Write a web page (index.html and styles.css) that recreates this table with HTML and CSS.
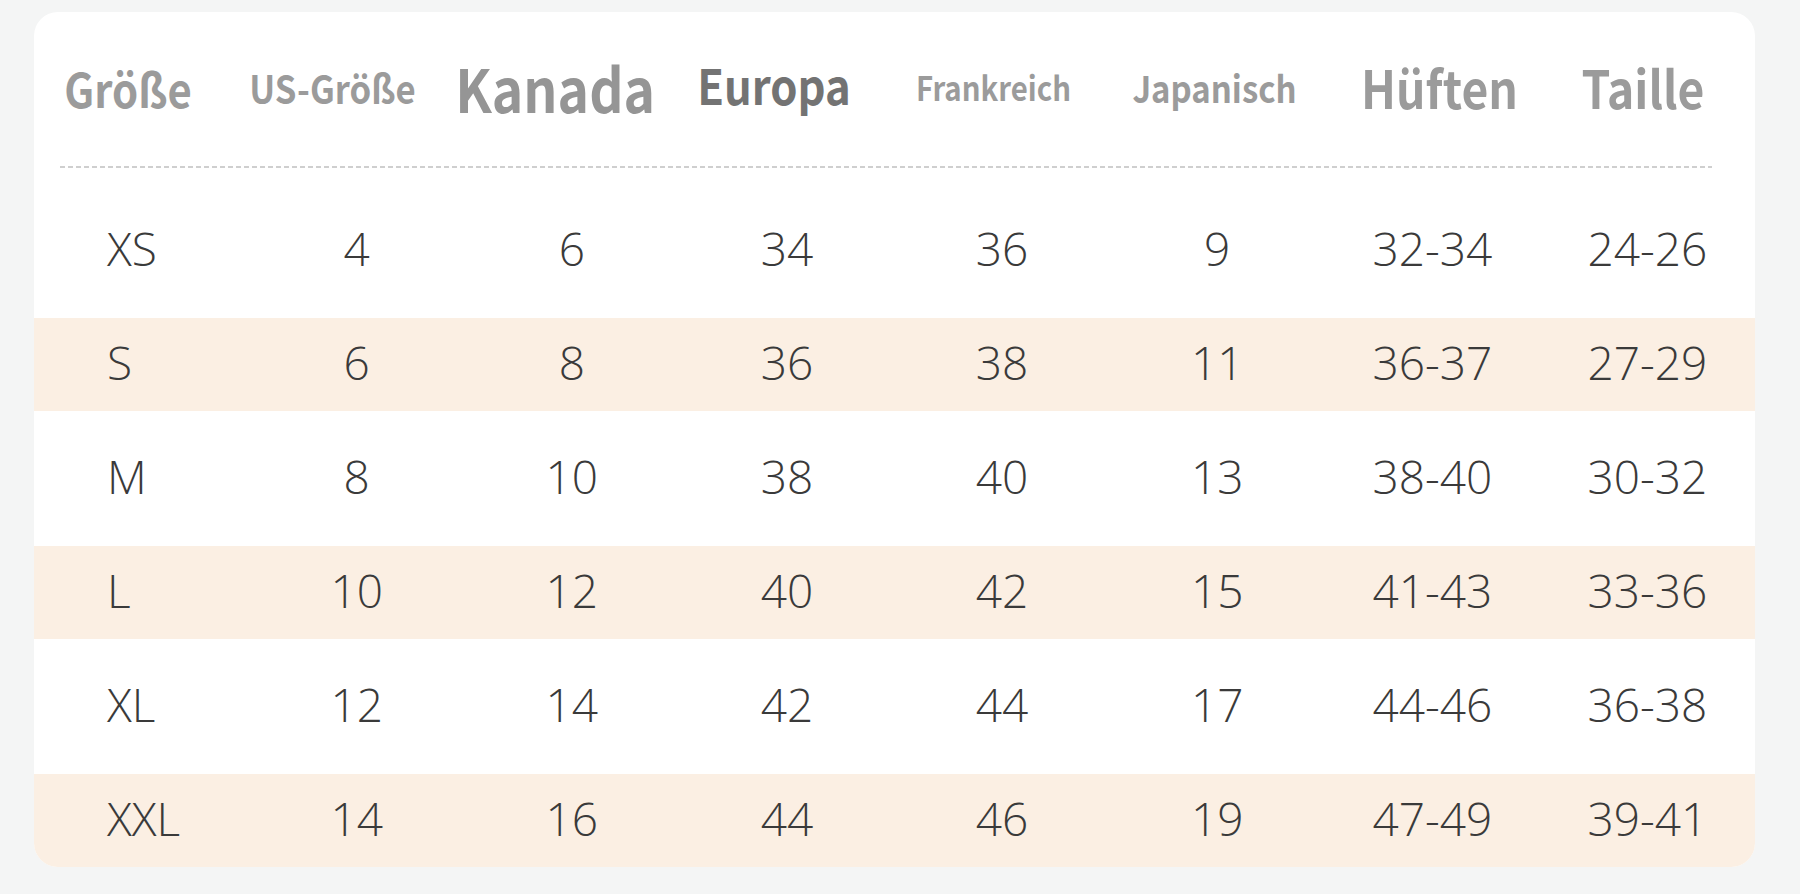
FILE: index.html
```html
<!DOCTYPE html>
<html lang="de">
<head>
<meta charset="utf-8">
<title>Größentabelle</title>
<link rel="stylesheet" href="styles.css">
</head>
<body>
<div class="page">
  <section class="card">
    <div class="head">
      <div class="h h-size">Größe</div>
      <div class="h h-us">US-Größe</div>
      <div class="h h-ca">Kanada</div>
      <div class="h h-eu">Europa</div>
      <div class="h h-fr">Frankreich</div>
      <div class="h h-jp">Japanisch</div>
      <div class="h h-hip">Hüften</div>
      <div class="h h-waist">Taille</div>
    </div>
    <div class="rule"></div>
    <div class="rows">
      <div class="row"><span class="c first">XS</span><span class="c">4</span><span class="c">6</span><span class="c">34</span><span class="c">36</span><span class="c">9</span><span class="c">32-34</span><span class="c">24-26</span></div>
      <div class="row band"><span class="c first">S</span><span class="c">6</span><span class="c">8</span><span class="c">36</span><span class="c">38</span><span class="c">11</span><span class="c">36-37</span><span class="c">27-29</span></div>
      <div class="row"><span class="c first">M</span><span class="c">8</span><span class="c">10</span><span class="c">38</span><span class="c">40</span><span class="c">13</span><span class="c">38-40</span><span class="c">30-32</span></div>
      <div class="row band"><span class="c first">L</span><span class="c">10</span><span class="c">12</span><span class="c">40</span><span class="c">42</span><span class="c">15</span><span class="c">41-43</span><span class="c">33-36</span></div>
      <div class="row"><span class="c first">XL</span><span class="c">12</span><span class="c">14</span><span class="c">42</span><span class="c">44</span><span class="c">17</span><span class="c">44-46</span><span class="c">36-38</span></div>
      <div class="row band"><span class="c first">XXL</span><span class="c">14</span><span class="c">16</span><span class="c">44</span><span class="c">46</span><span class="c">19</span><span class="c">47-49</span><span class="c">39-41</span></div>
    </div>
  </section>
</div>
</body>
</html>
```

FILE: styles.css
```css
html, body {
  margin: 0;
  padding: 0;
  background: #f4f5f5;
}

.page {
  width: 1800px;
  height: 894px;
  padding: 12px 45px 0 34px;
  box-sizing: border-box;
}

.card {
  width: 1721px;
  height: 855px;
  background: #ffffff;
  border-radius: 24px;
  overflow: hidden;
}

.head {
  display: grid;
  grid-template-columns: 188px 221px 221px 220px 219px 223px 215px 204px;
  align-items: center;
  height: 150px;
  padding-bottom: 4px;
  font-family: "Noto Sans CJK SC", "Noto Sans", sans-serif;
  font-weight: 700;
  color: #9b9b9b;
  white-space: nowrap;
}

.h {
  text-align: center;
  line-height: 1;
  transform: scaleX(0.89);
}

.h-size { text-align: left; padding-left: 34px; font-size: 47px; transform-origin: left center; }
.h-us { font-size: 39px; }
.h-ca { font-size: 60px; color: #959595; }
.h-eu { font-size: 49px; color: #737373; margin-bottom: 8px; }
.h-fr { font-size: 33px; }
.h-jp { font-size: 37px; }
.h-hip { font-size: 52px; margin-left: 12px; }
.h-waist { font-size: 52px; }

.rule {
  height: 2px;
  margin: 0 43px 0 26px;
  background: repeating-linear-gradient(to right, #cfcfcf 0 5px, transparent 5px 8px);
}

.rows {
  display: flex;
  flex-direction: column;
  gap: 21px;
  padding-top: 36px;
}

.row {
  display: grid;
  grid-template-columns: repeat(8, 1fr);
  align-items: center;
  height: 93px;
  box-sizing: border-box;
  padding-bottom: 5px;
  font-family: "Open Sans", "Noto Sans", sans-serif;
  font-weight: 300;
  font-size: 46px;
  color: #3a3a3a;
}

.band {
  background: #fbefe3;
}

.c {
  text-align: center;
  line-height: 1;
}

.c.first {
  text-align: left;
  padding-left: 73px;
}
```
